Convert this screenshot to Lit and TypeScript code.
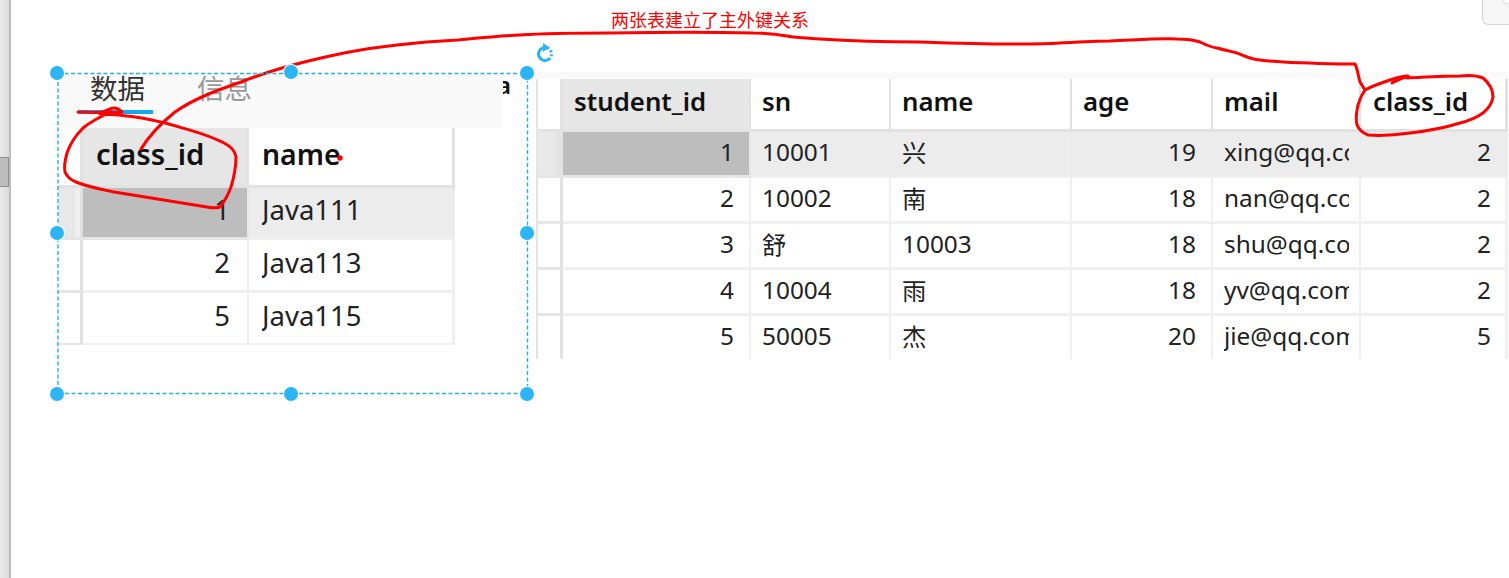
import { LitElement, html, css } from "lit";
import { customElement } from "lit/decorators.js";

interface Col { text: string; num?: boolean; key?: boolean }

@customElement("data-table")
class DataTable extends LitElement {
  static properties = { cols: { type: Array }, rows: { type: Array }, variant: { type: String } };
  cols: Col[] = [];
  rows: string[][] = [];
  variant = "right";
  static styles = css`
    :host { display: block; }
    .grid { display: grid; font-family: "Noto Sans", "Noto Sans CJK SC", sans-serif; color: #222; }
    .right { grid-template-columns: 25px 188px 140px 181px 141px 148px 147px;
             grid-template-rows: 53px 46px 46px 46px 46px 43px; font-size: 24.4px; border-left: 2px solid #e4e4e4; }
    .left { grid-template-columns: 25px 166px 206px;
            grid-template-rows: 60px 52px 53px 52px; font-size: 27.5px; }
    .c { box-sizing: border-box; border-right: 2px solid #f0f0f0; border-bottom: 3px solid #f0f0f0;
         background: #fff; display: flex; align-items: center; padding: 0 10px 5px 11px; white-space: nowrap; min-width: 0; }
    .left .c { padding: 0 16px 6px 13px; }
    .inner { overflow: hidden; flex: 1; min-width: 0; }
    .num { text-align: right; padding-right: 5px; }
    .left .num { padding-right: 1px; }
    .head { font-weight: 600; color: #111; border-right-color: #e2e2e2; border-bottom-color: #e2e2e2; }
    .right .head { font-size: 25.8px; padding-bottom: 6px; }
    .left .head { font-size: 29.4px; }
    .left .name { font-size: 28.4px; }
    .key { background: #e6e6e6; }
    .right .rh, .left .rh { border-right: 3px solid #e2e2e2; border-bottom-color: #e6e6e6; padding: 0; }
    .right .rh.corner, .left .rh.corner { border-bottom-color: #e2e2e2; }
    .sel { background: #ececec; border-bottom-color: #f0f0f0; border-right-color: #ebebeb; }
    .right .rh.sel { background: #e9e9e9; box-shadow: inset -4px 0 #e2e2e2; border-right-color: #e2e2e2; }
    .left .rh.sel { background: #e8e8e8; box-shadow: inset -5px 0 #efefef; border-right-color: #e0e0e0; }
    .cur { background: #bdbdbd; border-right-color: #e6e6e6; border-bottom-color: #e6e6e6; }
    .lastcol { border-right-width: 3px; }
    .right .lastcol { padding-left: 12px; padding-right: 9px; }
    .right .last { border-bottom: 0; }
    .left .last { border-bottom-width: 2px; }
  `;
  render() {
    const n = this.rows.length;
    return html`<div class="grid ${this.variant}">
      <div class="c rh corner"></div>
      ${this.cols.map((c, i) => html`<div class="c head ${c.key ? "key" : "name"} ${i === this.cols.length - 1 ? "lastcol" : ""}"><div class="inner">${c.text}</div></div>`)}
      ${this.rows.map((r, ri) => html`
        <div class="c rh ${ri === 0 ? "sel" : ""} ${ri === n - 1 ? "last" : ""}"></div>
        ${r.map((v, i) => html`<div class="c ${ri === 0 ? "sel" : ""} ${ri === 0 && i === 0 ? "cur" : ""} ${ri === n - 1 ? "last" : ""} ${i === r.length - 1 ? "lastcol" : ""}"><div class="inner ${this.cols[i].num ? "num" : ""}">${v}</div></div>`)}
      `)}
    </div>`;
  }
}

const leftCols: Col[] = [{ text: "class_id", num: true, key: true }, { text: "name" }];
const leftRows = [["1", "Java111"], ["2", "Java113"], ["5", "Java115"]];
const rightCols: Col[] = [
  { text: "student_id", num: true, key: true }, { text: "sn" }, { text: "name" },
  { text: "age", num: true }, { text: "mail" }, { text: "class_id", num: true },
];
const rightRows = [
  ["1", "10001", "兴", "19", "xing@qq.com", "2"],
  ["2", "10002", "南", "18", "nan@qq.com", "2"],
  ["3", "舒", "10003", "18", "shu@qq.com", "2"],
  ["4", "10004", "雨", "18", "yv@qq.com", "2"],
  ["5", "50005", "杰", "20", "jie@qq.com", "5"],
];

@customElement("app-root")
class AppRoot extends LitElement {
  static styles = css`
    :host { display: block; }
    .page { position: relative; width: 1509px; height: 578px; background: #fff; display: flex; overflow: hidden; }
    .rail { box-sizing: border-box; width: 11px; flex: none; padding-top: 157px;
            background: linear-gradient(90deg, #e9e9e9, #dcdcdc); border-right: 2px solid #bcbcbc; }
    .thumb { height: 30px; background: #bdbdbd; border: 1px solid #8e8e8e; border-left: 0; box-sizing: border-box; }
    .content { flex: 1; display: flex; align-items: flex-start; gap: 33px; padding: 72px 0 0 47px; }
    .shot-left { position: relative; width: 445px; margin-top: 2px; }
    .tabs { height: 54px; background: #f9f9f9; display: flex; gap: 52px; padding-left: 32px; align-items: flex-start; position: relative; }
    .tab { font: 27.5px "Noto Sans CJK SC", sans-serif; line-height: 27px; color: #999; height: 40px; position: relative; }
    .tab.on { color: #333; }
    .tab.on::after { content: ""; position: absolute; left: -12px; right: -8px; top: 36px; height: 4px; background: #11a8ef; }
    .frag { position: absolute; left: 445px; top: -1px; width: 8px; height: 24px; overflow: hidden; font: 600 24px "Noto Sans", sans-serif; color: #111; line-height: 24px; direction: rtl; }
    .h { position: absolute; width: 14px; height: 14px; margin: -7px 0 0 -7px; border-radius: 50%; background: #2bb5f5; box-shadow: 0 0 0 1px #fff; }
    .shot-right { width: 972px; }
    .strip { height: 7px; background: #f9f9f9; }
    .ink { position: absolute; left: 0; top: 0; pointer-events: none; }
    .rotate { position: absolute; left: 535px; top: 43px; }
    .note { position: absolute; left: 611px; top: 6px; font: 18px/26px "Noto Sans CJK SC", sans-serif; color: #f00; white-space: nowrap; }
    .corner { position: absolute; right: 0; top: 0; width: 27px; height: 25px; box-sizing: border-box; background: #f6f6f6; border: 1px solid #d4d4d4; border-top: 0; border-right: 0; border-bottom-left-radius: 6px; }
    .corner-in { position: absolute; right: 0; top: 0; width: 6px; height: 4px; box-sizing: border-box; background: #fdfdfd; border: 1px solid #e2e2e2; border-top: 0; border-right: 0; border-bottom-left-radius: 3px; }
  `;
  render() {
    const pos: [number, number][] = [[57, 73], [291, 72], [527, 73], [57, 233], [527, 233], [57, 394], [291, 394], [527, 394]];
    return html`<div class="page">
      <div class="rail"><div class="thumb"></div></div>
      <div class="content">
        <div class="shot-left">
          <div class="tabs">
            <div class="tab on">数据</div><div class="tab">信息</div>
            <div class="frag">a</div>
          </div>
          <data-table variant="left" .cols=${leftCols} .rows=${leftRows}></data-table>
        </div>
        <div class="shot-right">
          <div class="strip"></div>
          <data-table variant="right" .cols=${rightCols} .rows=${rightRows}></data-table>
        </div>
      </div>
      <svg class="ink" width="1509" height="578" viewBox="0 0 1509 578" fill="none" stroke="#f00" stroke-width="3" stroke-linecap="round" stroke-linejoin="round">
        <path d="M141 149C150 134 160 124 175 112C195 98 218 90 241 82C262 74 286 65 344 53C385 45 420 42 458 40C480 38 500 36 520 35C550 33 580 33 610 33C660 32 720 32 753 33C765 33 775 34 787 36C798 38 808 38 820 39C850 41 885 42 920 42C950 43 985 44 1010 44C1030 44 1045 44 1060 43C1078 42 1095 41 1110 41C1135 40 1160 38 1177 39C1188 39 1194 40 1200 42C1206 45 1210 47 1217 48C1224 50 1230 51 1237 53C1245 56 1250 59 1260 60C1278 62 1295 63 1310 63C1325 64 1342 64 1355 64C1358 70 1358 76 1360 82C1362 85 1363 87 1365 90"/>
        <path d="M78 112C88 112 96 113 103 112C108 110 111 108 114 108C117 108 120 110 122 112C118 113 114 113 110 112C100 117 90 122 83 128C75 136 70 144 67 153C65 160 64 167 65 172C67 177 71 180 76 182C88 187 100 189 114 192C145 197 176 202 207 207C212 208 217 208 220 207C224 202 228 195 231 187C234 177 236 167 236 157C235 150 230 146 224 143C205 133 185 129 165 123C152 120 140 117 127 116C118 115 108 114 100 114"/>
        <path d="M1392 83C1397 80 1403 78 1408 76C1402 76 1396 78 1390 80C1381 83 1372 86 1365 90C1361 96 1358 103 1357 110C1356 116 1356 121 1357 125C1359 130 1363 133 1368 135C1382 136 1396 135 1410 133C1427 131 1444 128 1460 123C1468 121 1476 118 1483 113C1488 109 1492 103 1493 97C1493 90 1489 83 1483 78C1476 75 1468 75 1460 76C1442 76 1425 77 1407 78"/>
        <circle cx="340" cy="158" r="1.2" fill="#f00"/>
        <rect x="58" y="73.5" width="469.5" height="320" stroke="#1fb0f5" stroke-width="1.4" stroke-dasharray="4 2.5" stroke-linecap="butt"/>
      </svg>
      ${pos.map(([x, y]) => html`<div class="h" style="left:${x}px;top:${y}px"></div>`)}
      <svg class="rotate" width="20" height="20" viewBox="0 0 20 20" fill="none">
        <circle cx="10" cy="11" r="6.5" stroke="#2bb5f5" stroke-width="3" stroke-dasharray="2 2 2 2 2 2 28.8 0" transform="rotate(-70 10 11)"/>
        <path d="M8 0L14.5 4.5L8 9Z" fill="#2bb5f5"/>
      </svg>
      <div class="note">两张表建立了主外键关系</div>
      <div class="corner"><div class="corner-in"></div></div>
    </div>`;
  }
}
